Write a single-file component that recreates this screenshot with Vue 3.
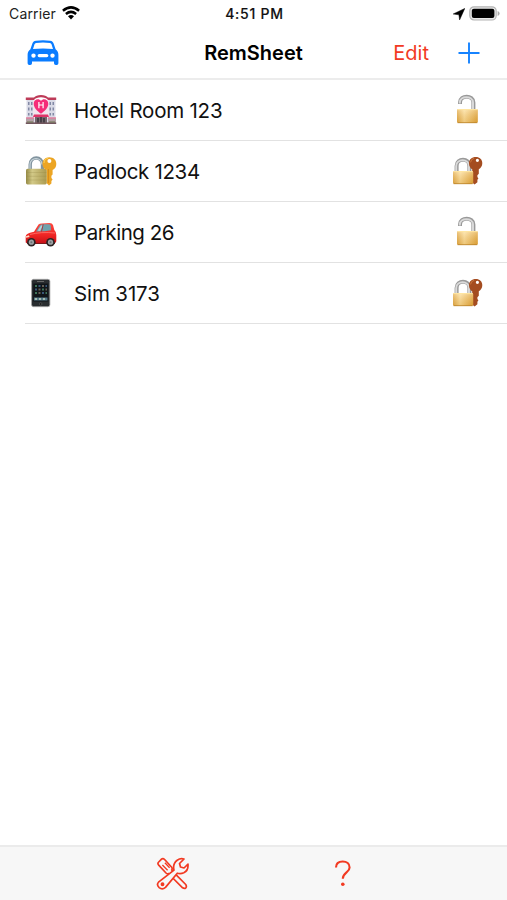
<script setup>
const items = [
  { name: 'Hotel Room 123', icon: 'hotel', locked: false },
  { name: 'Padlock 1234', icon: 'padlock', locked: true },
  { name: 'Parking 26', icon: 'car', locked: false },
  { name: 'Sim 3173', icon: 'phone', locked: true },
]
</script>

<template>
  <div class="screen">
    <div class="status">
      <div class="carrier">
        <span>Carrier</span>
        <svg width="18" height="14" viewBox="0 0 18 14">
          <g fill="none" stroke="#000" stroke-width="2.5">
            <path d="M.9 4.8Q9-2 17.1 4.8" />
            <path d="M3.9 8Q9 3.7 14.1 8" />
          </g>
          <path d="M6 10.3Q9 7.8 12 10.3L9 13.4Z" />
        </svg>
      </div>
      <div class="time">4:51 PM</div>
      <div class="indicators">
        <svg width="12" height="12" viewBox="0 0 12 12"><path d="M11.8.4 6.6 11.9 5.9 6.8.2 6Z" stroke="#000" stroke-width=".5" /></svg>
        <svg width="31" height="15" viewBox="0 0 31 15">
          <rect x=".8" y=".8" width="26.4" height="13.2" rx="4.2" fill="#e9e9e9" stroke="#b4b4b4" stroke-width="1.2" />
          <rect x="2.8" y="2.8" width="22.6" height="9.2" rx="2" />
          <path d="M28.6 5q2 .8 2 2.5t-2 2.5z" fill="#aaa" />
        </svg>
      </div>
    </div>

    <header class="nav">
      <button class="plain">
        <svg width="32" height="26" viewBox="0 0 32 26">
          <path fill="#0a7cff" fill-rule="evenodd" d="M9 .8Q16-.2 23 .8C25.2 1.1 26.2 2.2 26.8 4L28.6 9.3C30.6 11 31.4 12.3 31.4 15V23.2Q31.4 25 29.7 25H28.8Q27 25 27 23.2V21.6H5V23.2Q5 25 3.2 25H2.3Q.6 25 .6 23.2V15C.6 12.3 1.4 11 3.4 9.3L5.2 4C5.8 2.2 6.8 1.1 9 .8ZM9 3Q8 3.2 7.5 4.3L6 9Q16 7.9 26 9L24.5 4.3Q24 3.2 23 3Q16 2.2 9 3ZM6.5 13.4A2.2 2.2 0 1 0 6.5 17.8A2.2 2.2 0 1 0 6.5 13.4ZM25.5 13.4A2.2 2.2 0 1 0 25.5 17.8A2.2 2.2 0 1 0 25.5 13.4ZM12.3 13.9Q10.6 13.9 10.6 15.6T12.3 17.3H19.7Q21.4 17.3 21.4 15.6T19.7 13.9Z" />
        </svg>
      </button>
      <h1>RemSheet</h1>
      <div class="actions">
        <button class="plain edit">Edit</button>
        <button class="plain">
          <svg width="22" height="22" viewBox="0 0 22 22"><path d="M11 .5V21.5M.5 11H21.5" stroke="#1683ff" stroke-width="1.9" /></svg>
        </button>
      </div>
    </header>

    <svg class="defs" width="0" height="0">
      <defs>
        <linearGradient id="gold"><stop offset="0" stop-color="#e5ae4d" /><stop offset=".35" stop-color="#ffe09a" /><stop offset="1" stop-color="#e4a83e" /></linearGradient>
        <linearGradient id="brass"><stop offset="0" stop-color="#958a45" /><stop offset=".3" stop-color="#d2c987" /><stop offset="1" stop-color="#aa9a50" /></linearGradient>
        <linearGradient id="shade" x2="0" y2="1"><stop offset="0" stop-color="#fff" stop-opacity=".3" /><stop offset="1" stop-color="#a96800" stop-opacity=".2" /></linearGradient>
        <linearGradient id="red" x2="0" y2="1"><stop offset="0" stop-color="#ff493f" /><stop offset=".6" stop-color="#ef2524" /><stop offset="1" stop-color="#c51217" /></linearGradient>
      </defs>
    </svg>

    <ul class="list">
      <li v-for="item in items" :key="item.name">
        <svg v-if="item.icon === 'hotel'" class="glyph" viewBox="0 0 32 32">
          <path d="M1.5 6H30.5V29H1.5Z" fill="#dadbe7" />
          <path d="M8 6H24V24H8Z" fill="#f1e5ed" />
          <path d="M.8 6V3.5H9Q11 1 16 1T23 3.5H31.2V6H23Q21 3.3 16 3.3T9 6Z" fill="#bd3b58" />
          <path fill="#8289a5" d="M3 8h1.5v3H3zM6 8h1.5v3H6zM24.5 8H26v3h-1.5zM27.5 8H29v3h-1.5zM3 13.5h1.5v3H3zM6 13.5h1.5v3H6zM24.5 13.5H26v3h-1.5zM27.5 13.5H29v3h-1.5zM3 19h1.5v2.5H3zM6 19h1.5v2.5H6zM24.5 19H26v2.5h-1.5zM27.5 19H29v2.5h-1.5z" />
          <path d="M16 19.8C12.2 17 8.7 13.8 8.7 9.8C8.7 5 14 3.9 16 7.1C18 3.9 23.3 5 23.3 9.8C23.3 13.8 19.8 17 16 19.8Z" fill="#f52d79" />
          <path d="M13.9 8V14.2M18.1 8V14.2M13.9 11H18.1" stroke="#fff" stroke-width="1.2" />
          <path d="M9 20.5H23L24 23H8Z" fill="#df3569" />
          <path d="M10 23H22V30H10Z" fill="#74666c" />
          <path d="M13 24V30M16 23V30M19 24V30" stroke="#29272d" stroke-width="1.2" />
          <path d="M1 24.5H9V29H1ZM23 24.5H31V29H23Z" fill="#b4a2a8" />
          <path d="M1 24H9M23 24H31" stroke="#e0527c" stroke-width="1.2" />
          <path d="M.8 29.2H31.2" stroke="#72565e" stroke-width="1.6" />
          <path d="M2 28H8M24 28H30" stroke="#6b7650" stroke-width="1" />
        </svg>
        <svg v-else-if="item.icon === 'padlock'" class="glyph" viewBox="0 0 32 32">
          <path d="M5.2 16V9.5C5.2.9 17.5.9 17.5 9.5V16" fill="none" stroke="#82949f" stroke-width="3.4" />
          <path d="M5 15V9.5C5 1.7 17 1.7 17 9.5" fill="none" stroke="#c7d4da" stroke-width="1.2" />
          <rect x="1" y="13.8" width="20.8" height="15.6" rx="1.6" fill="url(#brass)" />
          <path d="M1.5 17.5H21.5M1.5 21.3H21.5M1.5 25H21.5" stroke="#918443" stroke-width=".7" opacity=".35" />
          <path fill="#eca524" fill-rule="evenodd" d="M24.4 2.3C20.2 2.3 17.5 5.1 17.5 9C17.5 12 19 14 21.8 15V28.2L24 30.5L26.4 28.6V26L27.6 24.5L26.4 23V20.8L27.6 19.5V15C29.9 14 31.3 12 31.3 9C31.3 5.1 28.6 2.3 24.4 2.3ZM24.4 4.1A2 2 0 1 1 24.4 8.1A2 2 0 1 1 24.4 4.1Z" />
          <path d="M23.4 14V28" stroke="#c98117" stroke-width=".7" />
          <path d="M19 8C19 5 20.8 3.6 23 3.2" stroke="#ffd35a" stroke-width="1" fill="none" />
        </svg>
        <svg v-else-if="item.icon === 'car'" class="glyph" viewBox="0 0 32 32">
          <path d="M2 26H30V28H2Z" fill="#641b1c" />
          <path d="M.7 26.5V20.5Q1 18 5 16.8L9 15.7L13.5 8.6Q14.5 7.5 17 7.4L24.5 7.1Q27.2 7.1 28 9.1L29.3 14Q31.3 15.8 31.3 19V25.2Q31 27.2 29 27.2H2Z" fill="url(#red)" />
          <path d="M11 15.5L15 9.3Q16 8.3 18 8.3H24Q25.5 8.3 25.8 10L26 14.3Q19 15.7 11 15.5Z" fill="#70a2ad" />
          <path d="M12.7 14.5L16 9.5H18L15 15Z" fill="#b7d4da" />
          <path d="M18.2 8.3L16.5 15.5" stroke="#b71b20" stroke-width=".8" />
          <path d="M1 20.2L4 19.2L4.5 21L1 21.7Z" fill="#ffd9c2" />
          <path d="M5 18.5Q16 15.5 30 17" stroke="#ff7670" stroke-width=".8" fill="none" />
          <g fill="#2c2424"><circle cx="6.4" cy="26.2" r="4.3" /><circle cx="25.5" cy="26.2" r="4.3" /></g>
          <g fill="#9da3a5"><circle cx="6.4" cy="26.2" r="2.6" /><circle cx="25.5" cy="26.2" r="2.6" /></g>
          <g fill="#6b7073"><circle cx="6.4" cy="26.2" r="1" /><circle cx="25.5" cy="26.2" r="1" /></g>
        </svg>
        <svg v-else class="glyph" viewBox="0 0 32 32">
          <rect x="6.5" y="2.3" width="18.4" height="27.4" rx="2" fill="#292d30" stroke="#aaa" stroke-width=".8" />
          <rect x="8.3" y="6.5" width="14.9" height="18" fill="#101519" />
          <path d="M12 4.5H19" stroke="#777" stroke-width=".8" />
          <path d="M10 9H12M17 12.5H19M10 16H12M20.5 16H22" stroke="#3d7358" stroke-width="2" />
          <path d="M13.5 9H15.5M20.5 9H22M10 12.5H12M17 16H19" stroke="#38587a" stroke-width="2" />
          <path d="M17 9H19M13.5 12.5H15.5M13.5 16H15.5M20.5 12.5H22" stroke="#655e53" stroke-width="2" />
          <path d="M9 22H22.5" stroke="#557b8a" stroke-width="3" />
          <path d="M10 22H12M14 22H16M18 22H20" stroke="#a5bcb0" stroke-width="1.8" />
          <circle cx="15.7" cy="27" r="1.2" fill="#080808" stroke="#777" stroke-width=".5" />
        </svg>

        <span class="name" :class="item.icon">{{ item.name }}</span>

        <svg v-if="!item.locked" class="glyph" viewBox="0 0 32 32">
          <path d="M9 10V8.4C9 .7 22.4.7 22.4 8.4V17" fill="none" stroke="#999" stroke-width="4" />
          <path d="M8.8 9.4V8.4C8.8 1.4 22 1.4 22 8.4V15" fill="none" stroke="#d9d9d9" stroke-width="2" />
          <rect x="6" y="15" width="20.8" height="14" rx="1.4" fill="url(#gold)" />
          <rect x="6" y="15" width="20.8" height="14" rx="1.4" fill="url(#shade)" />
          <path d="M6.5 15.6H26.3" stroke="#ffe6a0" /><path d="M6.5 28.7H26.3" stroke="#b98227" stroke-width=".8" />
        </svg>
        <svg v-else class="glyph" viewBox="0 0 32 32">
          <path d="M5.6 17V11C5.6 2.8 18.4 2.8 18.4 11V17" fill="none" stroke="#999" stroke-width="4" />
          <path d="M5.2 16V11C5.2 3.4 18 3.4 18 11V16" fill="none" stroke="#dadada" stroke-width="1.9" />
          <path fill="#a44c20" fill-rule="evenodd" d="M24.8 2C20.8 2 18 4.4 18 8.2C18 11.4 19.6 13.2 21.2 14.3V27.5L23.6 29.4L26.4 27.2V24.8L27.4 23.5L26.4 22V20.2L27.8 18.7V14.3C29.8 13 31.3 11 31.3 8.2C31.3 4.4 28.7 2 24.8 2ZM26.4 3.7A1.6 1.6 0 1 1 26.4 6.9A1.6 1.6 0 1 1 26.4 3.7Z" />
          <path d="M19.5 7.4Q20 4 23.3 3.2" stroke="#c9753d" fill="none" />
          <rect x="2" y="16" width="20.2" height="13" rx="1.4" fill="url(#gold)" />
          <rect x="2" y="16" width="20.2" height="13" rx="1.4" fill="url(#shade)" />
          <path d="M2.5 16.6H21.7" stroke="#ffe6a0" /><path d="M2.5 28.7H21.7" stroke="#b98227" stroke-width=".8" />
        </svg>
      </li>
    </ul>

    <footer class="toolbar">
      <button class="plain">
        <svg width="34" height="34" viewBox="0 0 34 34" fill="#f7f7f7" stroke="#f23a22" stroke-width="1.7" stroke-linejoin="round">
          <path d="M2.7 8.2Q1.2 6.5 2.7 5L5.3 2.3Q7 1 8.6 2.5L15.7 10.3Q16.6 11.7 15.7 13L19.2 16.8L29.7 27.5Q31 29.5 29.8 30.8Q28.5 32 26.6 30.8L15.8 20L12.7 16.6Q11.3 17.3 10 16Z" />
          <path d="M6.4 8L11.6 13.2M8.9 5.8L13.6 10.8" stroke-width="1.3" />
          <path d="M2.5 25.2L18 13.2Q16.4 6.8 21.2 3.2Q24.2 1 28 2L23.5 6.5L24.5 10L28 11L32 7.2Q32.5 13.6 27.8 15.8Q24.6 17.2 21.3 16.2L9.5 30.4Q6.2 33.2 3.2 30.6Q.2 27.8 2.5 25.2Z" />
          <circle cx="6.5" cy="27.2" r="1.1" fill="#f23a22" />
        </svg>
      </button>
      <button class="plain">
        <svg width="18" height="28" viewBox="0 0 18 28">
          <path d="M2 7.5C2 3.6 4.8 1.5 8.7 1.5C12.8 1.5 15.6 3.8 15.6 7.4C15.6 12.6 8.8 12.2 8.8 18.8" fill="none" stroke="#f23a22" stroke-width="2.1" />
          <circle cx="8.8" cy="24.3" r="1.8" fill="#f23a22" />
        </svg>
      </button>
    </footer>
  </div>
</template>

<style>
body { margin: 0; background: #fff; }
</style>

<style scoped>
.screen { display: flex; flex-direction: column; width: 100%; height: 900px; overflow: hidden; background: #fff; color: #000; font-family: Inter, "Liberation Sans", sans-serif; }
.status { display: grid; grid-template-columns: 1fr auto 1fr; align-items: center; height: 27px; padding: 0 7px 0 9px; box-sizing: border-box; }
.carrier { display: flex; align-items: center; gap: 6px; font-size: 14px; color: #222; letter-spacing: .15px; }
.carrier svg { position: relative; top: -1px; }
.time { font-size: 14px; font-weight: 500; color: #111; letter-spacing: .75px; -webkit-text-stroke: .15px #111; }
.indicators { display: flex; justify-content: flex-end; align-items: center; gap: 4px; }
.plain { display: flex; padding: 0; border: 0; background: none; font: inherit; }
.nav { display: grid; grid-template-columns: 1fr auto 1fr; align-items: center; height: 53px; padding: 0 27px; box-sizing: border-box; border-bottom: 2px solid #ececec; }
.nav h1 { margin: 0; font-size: 20px; line-height: 24px; font-weight: 600; }
.actions { display: flex; justify-content: flex-end; align-items: center; gap: 29px; }
.edit { color: #f23a22; font-size: 20px; line-height: 24px; }
.defs { position: absolute; }
.list { list-style: none; margin: 0; padding: 0 0 0 25px; flex: 1; }
.list li { display: flex; align-items: center; height: 60px; padding-right: 24px; border-bottom: 1px solid #e2e2e2; }
.glyph { width: 32px; height: 32px; flex: none; }
.name { flex: 1; padding: 2px 0 0 17px; font-size: 20.5px; line-height: 26px; color: #111; white-space: nowrap; }
.name.hotel { letter-spacing: -.22px; }
.name.padlock { letter-spacing: -.34px; }
.name.car { letter-spacing: -.44px; }
.name.phone { letter-spacing: -.12px; }
.toolbar { display: flex; align-items: center; gap: 144px; height: 55px; padding-left: 156px; box-sizing: border-box; border-top: 2px solid #ebebeb; background: #f7f7f7; }
</style>
